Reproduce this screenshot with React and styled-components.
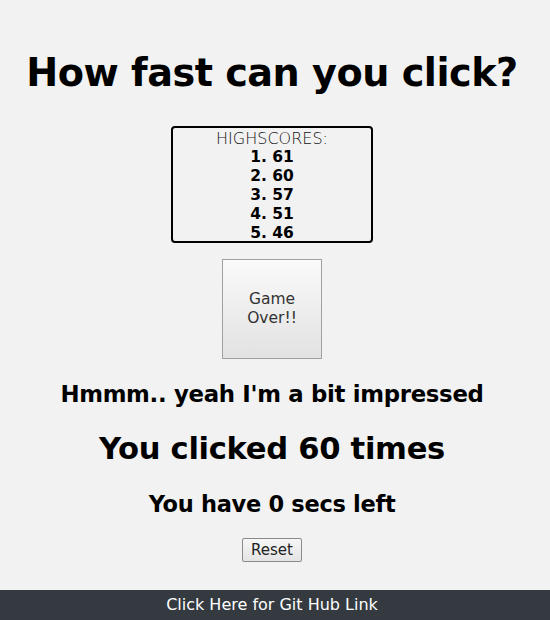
import React from "react";
import styled, { createGlobalStyle } from "styled-components";

const GlobalStyle = createGlobalStyle`
  html, body {
    margin: 0;
    padding: 0;
    background: #f2f2f2;
    font-family: "DejaVu Sans", "Liberation Sans", sans-serif;
    color: #000;
  }
`;

const Page = styled.div`
  width: 550px;
  height: 620px;
  display: flex;
  flex-direction: column;
  align-items: center;
  overflow: hidden;
`;

const Main = styled.main`
  width: 544px;
  align-self: flex-start;
  display: flex;
  flex-direction: column;
  align-items: center;
`;

const Title = styled.h1`
  margin: 50px 0 0;
  font-size: 38.2px;
  line-height: 46px;
  font-weight: 700;
  letter-spacing: -0.5px;
`;

const ScoreBox = styled.div`
  margin-top: 30px;
  width: 198px;
  height: 112px;
  border: 2px solid #000;
  border-radius: 4px;
  display: flex;
  flex-direction: column;
  align-items: center;
  padding-top: 1px;
  box-sizing: content-box;
`;

const ScoreHead = styled.div`
  font-size: 16px;
  line-height: 19px;
  font-weight: 300;
  color: #111;
`;

const ScoreLine = styled.div`
  font-size: 15.5px;
  line-height: 19px;
  font-weight: 700;
`;

const ClickButton = styled.button`
  margin-top: 16px;
  width: 100px;
  height: 100px;
  border: 1px solid #a0a0a0;
  background: linear-gradient(#fafafa, #e2e2e2);
  font-family: inherit;
  font-size: 15.5px;
  font-weight: 400;
  line-height: 19px;
  color: #333;
  padding: 0 14px;
`;

const Message = styled.h2`
  margin: ${(p) => p.$top}px 0 0;
  font-size: ${(p) => p.$size}px;
  line-height: ${(p) => Math.round(p.$size) + 6}px;
  font-weight: 700;
  letter-spacing: -0.3px;
`;

const ResetButton = styled.button`
  margin-top: 19px;
  height: 24px;
  padding: 0 8px;
  font-family: inherit;
  font-size: 15px;
  font-weight: 400;
  border: 1px solid #8a8a8a;
  border-radius: 2px;
  background: linear-gradient(#f6f6f6, #e4e4e4);
  color: #222;
`;

const Footer = styled.a`
  margin-top: auto;
  width: 100%;
  box-sizing: border-box;
  padding-right: 6px;
  height: 30px;
  background: #343a40;
  color: #fff;
  font-size: 16px;
  line-height: 30px;
  text-align: center;
  text-decoration: none;
`;

const scores = [61, 60, 57, 51, 46];

export default function App() {
  return (
    <Page>
      <GlobalStyle />
      <Main>
        <Title>How fast can you click?</Title>
        <ScoreBox>
          <ScoreHead>HIGHSCORES:</ScoreHead>
          {scores.map((s, i) => (
            <ScoreLine key={i}>
              {i + 1}. {s}
            </ScoreLine>
          ))}
        </ScoreBox>
        <ClickButton>Game Over!!</ClickButton>
        <Message $top={21} $size={22.8}>
          Hmmm.. yeah I'm a bit impressed
        </Message>
        <Message $top={21} $size={30.6}>
          You clicked 60 times
        </Message>
        <Message $top={23} $size={22.5}>
          You have 0 secs left
        </Message>
        <ResetButton>Reset</ResetButton>
      </Main>
      <Footer href="#">Click Here for Git Hub Link</Footer>
    </Page>
  );
}
